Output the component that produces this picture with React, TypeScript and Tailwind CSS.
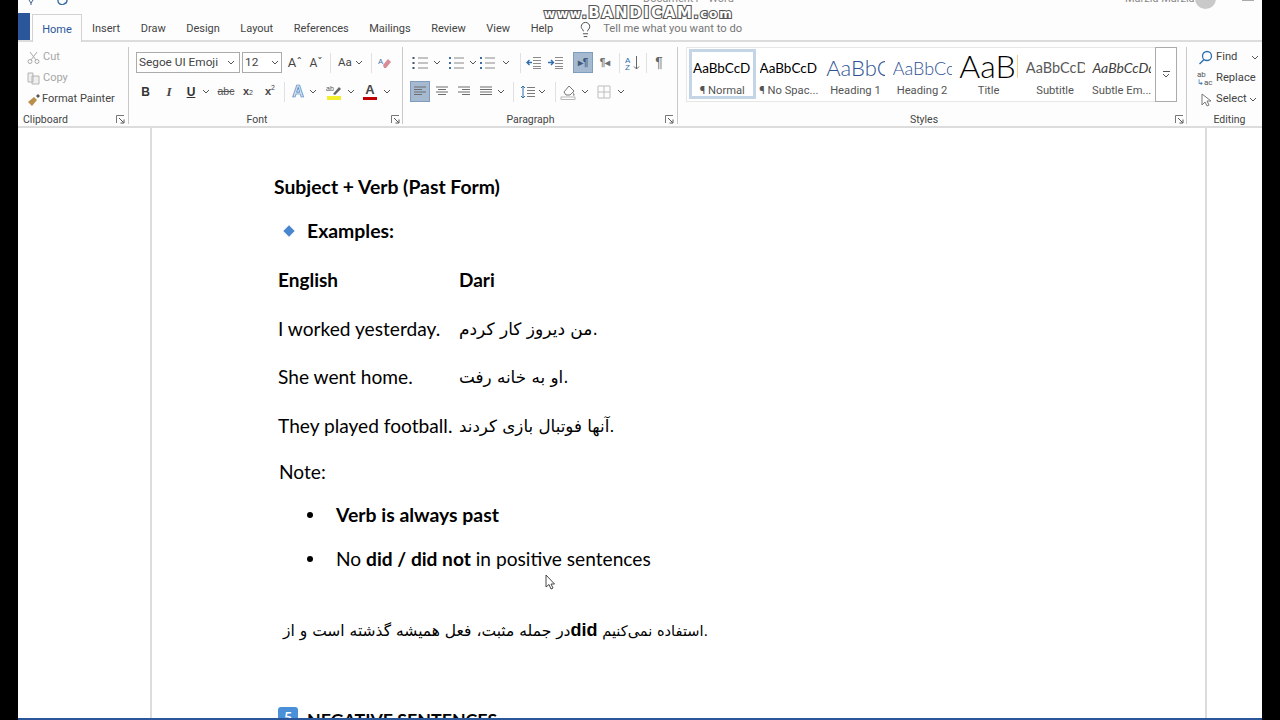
import React from 'react';
import { Lightbulb } from 'lucide-react';

const Chev = ({ className = '' }: { className?: string }) => (
  <svg width="8" height="5" viewBox="0 0 8 5" className={`shrink-0 ${className}`}>
    <path d="M1 1l3 3 3-3" stroke="#555" strokeWidth="1" fill="none" />
  </svg>
);

const Launcher = () => (
  <svg width="9" height="9" viewBox="0 0 9 9" className="shrink-0">
    <path d="M.5 8V.5H8" stroke="#777" fill="none" />
    <path d="M3 3l4.5 4.5M8 4.5V8H4.5" stroke="#555" fill="none" />
  </svg>
);

const Sep = () => <div className="w-px my-[2px] bg-[#c8c8c8] shrink-0" />;
const MiniSep = ({ className = '' }: { className?: string }) => <div className={`w-px h-[20px] bg-[#e1e1e1] shrink-0 ${className}`} />;

const Slot = ({ children, className = '' }: { children: React.ReactNode; className?: string }) => (
  <div className={`h-[21px] w-[20px] flex items-center justify-center shrink-0 ${className}`}>{children}</div>
);

const ListIcon = ({ nums = false }: { nums?: boolean }) => (
  <svg width="16" height="14" viewBox="0 0 16 14">
    {[2, 7, 12].map(y => (
      <g key={y}>
        <rect x={nums ? 1 : 0.5} y={y - 1} width="2" height="2" fill={nums ? '#3a6ea5' : '#44546a'} />
        <rect x="6" y={y - 0.5} width="10" height="1" fill="#8a8a8a" />
      </g>
    ))}
  </svg>
);

const AlignIcon = ({ rows }: { rows: [number, number][] }) => (
  <svg width="14" height="12" viewBox="0 0 14 12">
    {rows.map(([x, w], i) => (
      <rect key={i} x={x} y={i * 2.5 + 0.5} width={w} height="1" fill="#6e6e6e" />
    ))}
  </svg>
);

const IndentIcon = ({ flip = false }: { flip?: boolean }) => (
  <svg width="15" height="13" viewBox="0 0 15 13">
    {[1, 4, 7, 10, 12].map(y => (
      <rect key={y} x="7" y={y} width="8" height="1" fill="#8a8a8a" />
    ))}
    <path d={flip ? 'M0 6.5h5M3 4l2.5 2.5L3 9' : 'M6 6.5H1M3.5 4L1 6.5 3.5 9'} stroke="#2f6fb0" strokeWidth="1.4" fill="none" />
  </svg>
);

const tabs = ['Insert', 'Draw', 'Design', 'Layout', 'References', 'Mailings', 'Review', 'View', 'Help'];

const styles = [
  { label: '¶ Normal', text: 'AaBbCcD', cls: 'text-[13.5px] text-black font-["Lato"]' },
  { label: '¶ No Spac...', text: 'AaBbCcD', cls: 'text-[13.5px] text-black font-["Lato"]' },
  { label: 'Heading 1', text: 'AaBbCc', cls: 'text-[22px] font-light text-[#2f5496] font-["Lato"]' },
  { label: 'Heading 2', text: 'AaBbCcD', cls: 'text-[18px] font-light text-[#2f5496] font-["Lato"]' },
  { label: 'Title', text: 'AaBb', cls: 'text-[32px] font-light text-black font-["Lato"] pb-[5px]' },
  { label: 'Subtitle', text: 'AaBbCcD', cls: 'text-[14.5px] text-[#5a5a5a] font-["Lato"]' },
  { label: 'Subtle Em...', text: 'AaBbCcDd', cls: 'text-[14px] italic text-[#404040] font-["Lato"]' },
];

const Ribbon = () => (
  <div className="h-[84px] pt-[3px] flex bg-[#fdfdfd] shrink-0 text-[#444]">
    {/* Clipboard */}
    <div className="w-[110px] flex flex-col shrink-0 pl-[8px] pr-[3px] text-[11px]">
      <div className="h-[22px] mt-[1px] flex items-center text-[#a6a6a6]">
        <svg width="13" height="13" viewBox="0 0 13 13" className="ml-[1px] mr-[3px]">
          <path d="M3 1l6 8M10 1L4 9" stroke="#a9a9a9" fill="none" />
          <circle cx="3" cy="10.5" r="2" stroke="#a9a9a9" fill="none" />
          <circle cx="10" cy="10.5" r="2" stroke="#a9a9a9" fill="none" />
        </svg>
        Cut
      </div>
      <div className="h-[21px] flex items-center text-[#a6a6a6]">
        <svg width="13" height="13" viewBox="0 0 13 13" className="ml-[1px] mr-[3px]">
          <path d="M1 1h5v9H1zM5 4h7v8H5z" stroke="#b4b4b4" fill="#efefef" />
        </svg>
        Copy
      </div>
      <div className="h-[21px] flex items-center text-[#444]">
        <svg width="14" height="13" viewBox="0 0 14 13" className="ml-[1px] mr-[1px]">
          <path d="M1 9l6-5 3 3-5 6z" fill="#b98f4a" />
          <path d="M9 3l2-2 2 2-2 2z" fill="#555" />
        </svg>
        Format Painter
      </div>
      <div className="mt-auto h-[14px] pt-[1px] flex items-center justify-between text-[10.5px]">
        <span className="-ml-[3px]">Clipboard</span>
        <Launcher />
      </div>
    </div>
    <Sep />

    {/* Font */}
    <div className="w-[273px] flex flex-col shrink-0 text-[11.5px]">
      <div className="flex items-center h-[21px] mt-[7px] pl-[7px]">
        <div className="w-[104px] h-[21px] border border-[#ababab] bg-white flex items-center justify-between pl-[2px] pr-[4px] text-[11.8px]">
          Segoe UI Emoji <Chev />
        </div>
        <div className="w-[40px] h-[21px] ml-[2px] border border-[#ababab] bg-white flex items-center justify-between pl-[2px] pr-[2px] text-[11.8px]">
          12 <Chev />
        </div>
        <Slot className="ml-[3px]"><span className="text-[13px]">Aˆ</span></Slot>
        <Slot className="ml-[1px]"><span className="text-[12px]">Aˇ</span></Slot>
        <MiniSep className="ml-[4px]" />
        <Slot className="ml-[4px]"><span className="text-[11.5px]">Aa</span></Slot>
        <Chev />
        <MiniSep className="ml-[8px]" />
        <Slot className="ml-[3px]">
          <svg width="14" height="14" viewBox="0 0 14 14">
            <path d="M5 9l5-6 3 3-5 6H6z" fill="#d98a94" />
            <text x="0" y="8" fontSize="8" fill="#3a6ea5">A</text>
          </svg>
        </Slot>
      </div>
      <div className="flex items-center h-[21px] mt-[8px] pl-[6px] font-['Liberation_Sans']">
        <Slot className="w-[21px] font-bold text-[12px] text-[#333]">B</Slot>
        <Slot className="w-[22px] ml-[2px] italic font-['Liberation_Serif'] font-bold text-[13px] text-[#444]">I</Slot>
        <Slot className="w-[22px] font-bold underline text-[12px] text-[#333]">U</Slot>
        <Chev />
        <Slot className="w-[22px] ml-[5px] line-through text-[10.5px] text-[#555]">abc</Slot>
        <Slot className="w-[22px] font-bold text-[11px]">x<sub className="text-[7px] font-normal">2</sub></Slot>
        <Slot className="w-[22px] font-bold text-[11px]">x<sup className="text-[7px] font-normal">2</sup></Slot>
        <MiniSep className="ml-[3px]" />
        <Slot className="w-[22px] ml-[2px]">
          <span className="text-[16px] font-bold text-[#dfeaf6] [-webkit-text-stroke:0.7px_#3a78b8]">A</span>
        </Slot>
        <Chev />
        <Slot className="w-[22px] ml-[6px]">
          <svg width="16" height="16" viewBox="0 0 16 16">
            <text x="0" y="7" fontSize="7" fill="#555">ab</text>
            <path d="M7 10l6-7 2 2-6 6z" fill="#666" />
            <rect x="1" y="12" width="14" height="4" fill="#f2ef2e" />
          </svg>
        </Slot>
        <Chev className="ml-[2px]" />
        <Slot className="w-[22px] ml-[4px]">
          <div className="flex flex-col items-center leading-none">
            <span className="text-[13px] font-bold text-[#444]">A</span>
            <span className="w-[14px] h-[3px] bg-[#c00000] mt-[1px]" />
          </div>
        </Slot>
        <Chev className="ml-[2px]" />
      </div>
      <div className="mt-auto h-[14px] pt-[1px] flex items-center">
        <span className="flex-1 text-center text-[10.5px] pr-[6px]">Font</span>
        <div className="mr-[2px]"><Launcher /></div>
      </div>
    </div>
    <Sep />

    {/* Paragraph */}
    <div className="w-[274px] flex flex-col shrink-0">
      <div className="flex items-center h-[21px] mt-[7px] pl-[7px]">
        <Slot><ListIcon /></Slot>
        <Chev className="ml-[3px]" />
        <Slot className="ml-[5px]"><ListIcon nums /></Slot>
        <Chev className="ml-[3px]" />
        <Slot><ListIcon nums /></Slot>
        <Chev className="ml-[5px]" />
        <MiniSep className="ml-[10px]" />
        <Slot className="ml-[2px]"><IndentIcon /></Slot>
        <Slot className="ml-[2px]"><IndentIcon flip /></Slot>
        <Slot className="ml-[8px] bg-[#a5b9d1] border border-[#7f9cbd] text-[10px] font-['Liberation_Sans'] font-bold text-[#3f5a78]">▸¶</Slot>
        <Slot className="ml-[2px] text-[10px] font-['Liberation_Sans'] font-bold text-[#6e6e6e]">¶◂</Slot>
        <MiniSep className="ml-[4px]" />
        <Slot className="ml-[3px]">
          <svg width="16" height="16" viewBox="0 0 16 16">
            <text x="0" y="7.5" fontSize="8" fill="#2f6fb0" fontFamily="Liberation Sans">A</text>
            <text x="0" y="15" fontSize="8" fill="#2f6fb0" fontFamily="Liberation Sans">Z</text>
            <path d="M11.5 1v13M9 11.5l2.5 2.5 2.5-2.5" stroke="#666" fill="none" />
          </svg>
        </Slot>
        <MiniSep className="ml-[3px]" />
        <Slot className="ml-[2px] text-[14px] font-['Liberation_Sans'] text-[#666]">¶</Slot>
      </div>
      <div className="flex items-center h-[21px] mt-[8px] pl-[7px]">
        <Slot className="bg-[#a5b9d1] border border-[#7f9cbd]"><AlignIcon rows={[[1, 12], [1, 8], [1, 12], [1, 8]]} /></Slot>
        <Slot className="ml-[2px]"><AlignIcon rows={[[1, 12], [3, 8], [1, 12], [3, 8]]} /></Slot>
        <Slot className="ml-[2px]"><AlignIcon rows={[[1, 12], [5, 8], [1, 12], [5, 8]]} /></Slot>
        <Slot className="ml-[2px]"><AlignIcon rows={[[1, 12], [1, 12], [1, 12], [1, 12]]} /></Slot>
        <Chev className="ml-[1px]" />
        <MiniSep className="ml-[8px]" />
        <Slot className="ml-[3px]">
          <svg width="15" height="14" viewBox="0 0 15 14">
            <path d="M3 1v12M1 3l2-2 2 2M1 11l2 2 2-2" stroke="#2f6fb0" fill="none" />
            {[2, 5, 8, 11].map(y => <rect key={y} x="7" y={y} width="8" height="1" fill="#7a7a7a" />)}
          </svg>
        </Slot>
        <Chev className="ml-[1px]" />
        <MiniSep className="ml-[9px]" />
        <Slot className="ml-[2px]">
          <svg width="17" height="16" viewBox="0 0 17 16">
            <path d="M4 8l5-6 5 5-4 4H6z" fill="#fff" stroke="#777" />
            <path d="M13 8l2 3-2 1z" fill="#999" />
            <rect x="1" y="13" width="14" height="2.5" fill="#fff" stroke="#999" strokeWidth=".7" />
          </svg>
        </Slot>
        <Chev className="ml-[3px]" />
        <Slot className="ml-[5px]">
          <svg width="14" height="14" viewBox="0 0 14 14">
            <path d="M1 1h12v12H1zM7 1v12M1 7h12" stroke="#bdbdbd" fill="none" />
          </svg>
        </Slot>
        <Chev className="ml-[3px]" />
      </div>
      <div className="mt-auto h-[14px] pt-[1px] flex items-center">
        <span className="flex-1 text-center text-[10.5px] pr-[7px]">Paragraph</span>
        <div className="mr-[3px]"><Launcher /></div>
      </div>
    </div>
    <Sep />

    {/* Styles */}
    <div className="w-[508px] flex flex-col shrink-0">
      <div className="flex mt-[2px] pl-[8px]">
        <div className="w-[469px] h-[55px] border-y border-l border-[#e6e6e6] bg-white pl-[2px] grid grid-cols-7">
          {styles.map((s, i) => (
            <div
              key={s.label}
              className={`h-[50px] mt-[1px] flex flex-col items-center overflow-hidden ${i === 0 ? 'border-[3px] border-[#c5d5e8]' : 'border-[3px] border-transparent'}`}
            >
              <div className={`h-[30px] pt-[3px] w-[59px] self-start ml-[1px] flex items-center overflow-hidden whitespace-nowrap leading-none ${s.cls}`}>
                {s.text}
              </div>
              <div className="text-[11.2px] leading-none mt-[3px] whitespace-nowrap text-[#555]">{s.label}</div>
            </div>
          ))}
        </div>
        <div className="w-[22px] h-[55px] border border-[#ababab] bg-white flex flex-col items-center justify-center">
          <div className="w-[7px] h-px bg-[#555] mb-[1px]" />
          <Chev />
        </div>
      </div>
      <div className="mt-auto h-[14px] pt-[1px] flex items-center">
        <span className="flex-1 text-center text-[10.5px] pr-[5px]">Styles</span>
        <div className="mr-[2px]"><Launcher /></div>
      </div>
    </div>
    <Sep />

    {/* Editing */}
    <div className="w-[75px] flex flex-col shrink-0 text-[11.2px]">
      <div className="h-[22px] mt-[1px] flex items-center">
        <svg width="15" height="15" viewBox="0 0 15 15" className="ml-[11px] mr-[3px]">
          <circle cx="9" cy="6" r="4.5" stroke="#2f6fb0" strokeWidth="1.3" fill="none" />
          <path d="M6 9.5L1.5 14" stroke="#2f6fb0" strokeWidth="1.5" />
        </svg>
        Find
        <Chev className="ml-[14px]" />
      </div>
      <div className="h-[21px] flex items-center">
        <div className="ml-[10px] w-[19px] text-[8px] leading-[8px] text-[#555]">ab<br /><span className="text-[#2f6fb0]">↳</span>ac</div>
        Replace
      </div>
      <div className="h-[21px] flex items-center">
        <svg width="12" height="14" viewBox="0 0 12 14" className="ml-[13px] mr-[4px]">
          <path d="M2 1v11l3-3 2 4 2-1-2-4h4z" stroke="#777" fill="#fff" />
        </svg>
        Select
        <Chev className="ml-[2px]" />
      </div>
      <div className="mt-auto h-[14px] pt-[1px] flex items-center pl-[10px]">
        <span className="flex-1 text-center text-[10.5px]">Editing</span>
      </div>
    </div>
  </div>
);

const Document = () => (
  <div className="flex-1 min-h-0 overflow-hidden bg-white border-t-2 border-[#dcdcdc]">
    <div className="ml-[132px] w-[1057px] h-full border-x-2 border-[#dcdcdc] pl-[122px] pt-[47px] text-black font-['Lato',sans-serif] text-[19.15px] leading-[24px] overflow-hidden">
      <div className="font-bold text-[19.35px]">Subject + Verb (Past Form)</div>
      <div className="mt-[20px] flex items-center font-bold text-[19.4px]">
        <span className="w-[8px] h-[8px] ml-[11px] rotate-45 bg-[#4a86d0]" />
        <span className="ml-[14px]">Examples:</span>
      </div>
      <div className="mt-[25px] pl-[4px] grid grid-cols-[181px_1fr] gap-y-[24.5px]">
        <div className="font-bold text-[19px]">English</div>
        <div className="font-bold text-[19px]">Dari</div>
        <div>I worked yesterday.</div>
        <div dir="ltr" className="font-['DejaVu_Sans'] text-[17px]">من دیروز کار کردم.</div>
        <div>She went home.</div>
        <div dir="ltr" className="font-['DejaVu_Sans'] text-[16.8px]">او به خانه رفت.</div>
        <div className="whitespace-nowrap">They played football.</div>
        <div dir="ltr" className="font-['DejaVu_Sans'] text-[16.7px]">آنها فوتبال بازی کردند.</div>
      </div>
      <div className="mt-[22px] pl-[5px]">Note:</div>
      <div className="mt-[19px] pl-[33px] flex items-center font-bold text-[19.4px]">
        <span className="w-[6px] h-[6px] rounded-full bg-black" />
        <span className="ml-[23px]">Verb is always past</span>
      </div>
      <div className="mt-[20px] pl-[33px] flex items-center">
        <span className="w-[6px] h-[6px] rounded-full bg-black" />
        <span className="ml-[23px]">No <b>did / did not</b> in positive sentences</span>
      </div>
      <div dir="ltr" className="mt-[47px] pl-[9px] font-['DejaVu_Sans'] text-[15.5px] whitespace-nowrap">
        در جمله مثبت، فعل همیشه گذشته است و از<b className="font-['Liberation_Sans'] text-[18px]">did</b><span className="text-[14.6px]"> استفاده نمی‌کنیم.</span>
      </div>
      <div className="mt-[64px] pl-[4px] flex items-start font-bold">
        <span className="w-[20px] h-[20px] rounded-[3px] bg-[#4a90d9] text-white text-[14px] leading-[20px] text-center">5</span>
        <span className="ml-[9px] text-[17.8px]">NEGATIVE SENTENCES</span>
      </div>
    </div>
  </div>
);

const App: React.FC = () => {
  return (
    <div className="w-[1280px] h-[720px] flex overflow-hidden bg-black relative font-['Roboto',sans-serif]">
      <div className="w-[18px] shrink-0 bg-black" />
      <div className="w-[1244px] shrink-0 flex flex-col bg-white">
        {/* title bar, cut off at the top of the shot */}
        <div className="h-[13px] shrink-0 flex items-start overflow-hidden bg-[#fdfdfd] text-[11px] text-[#8a8a8a] leading-none whitespace-nowrap">
          <svg width="60" height="5" viewBox="0 0 60 5" className="ml-[10px] shrink-0">
            <path d="M1 0l2 3 2-3M3 3v2" stroke="#3b5b8c" fill="none" />
            <path d="M30 0a4 4 0 0 0 6 4a4 4 0 0 0 3-4" stroke="#3b6ea5" strokeWidth="1.4" fill="none" />
          </svg>
          <span className="ml-[555px] -mt-[7px] w-[95px] shrink-0">Document1 - Word</span>
          <span className="ml-[387px] -mt-[7px] w-[62px] shrink-0">Marzia Marzia</span>
          <span className="ml-[8px] -mt-[12px] w-[21px] h-[21px] rounded-full bg-[#c9c9c9] shrink-0" />
          <span className="ml-[26px] w-[12px] h-px bg-[#aaa] shrink-0" />
        </div>
        {/* tabs */}
        <div className="h-[29px] shrink-0 flex items-end border-b-2 border-[#dcdcdc] bg-[#fdfdfd] text-[11px] text-[#444]">
          <div className="w-[12px] h-[27px] bg-[#2b579a]" />
          <div className="ml-[2px] w-[50px] h-[28px] pt-[3px] -mb-[2px] border border-b-0 border-[#d2d2d2] bg-[#fdfdfd] text-[#2b579a] flex items-center justify-center">Home</div>
          <div className="ml-[10px] h-[27px] pt-[5px] flex items-center gap-[20.5px]">
            {tabs.map(t => <span key={t}>{t}</span>)}
          </div>
          <div className="h-[27px] pt-[5px] flex items-center ml-[24px] text-[#767676] text-[11.2px]">
            <Lightbulb size={17} strokeWidth={1.3} className="text-[#444] mr-[9px]" />
            Tell me what you want to do
          </div>
        </div>
        <Ribbon />
        <Document />
        <div className="h-[2px] shrink-0 bg-[#2b579a]" />
      </div>
      <div className="w-[18px] shrink-0 bg-black" />

      {/* recorder watermark */}
      <div className="absolute left-[544px] top-[4px] font-['DejaVu_Sans'] font-bold text-white text-[12px] leading-[18px] tracking-[1.8px] whitespace-nowrap [-webkit-text-stroke:2.2px_#555] [paint-order:stroke_fill]">
        www.<span className="text-[15px]">BANDICAM</span>.com
      </div>
      {/* mouse pointer */}
      <svg width="10" height="16" viewBox="0 0 10 16" className="absolute left-[545px] top-[574px]">
        <path d="M1 1v12l3-2.5 2 4.5 2-1-2-4h3.5z" fill="#fff" stroke="#333" strokeWidth="0.9" />
      </svg>
    </div>
  );
};

export default App;
